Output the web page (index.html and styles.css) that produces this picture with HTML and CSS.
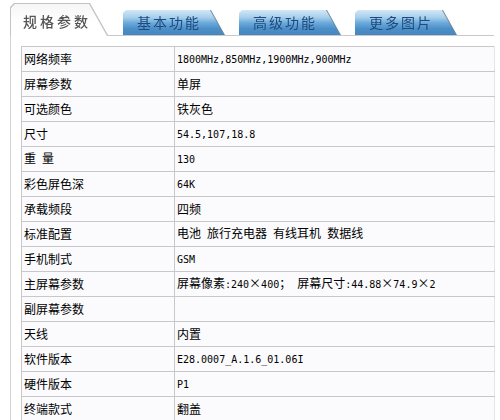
FILE: index.html
```html
<!DOCTYPE html>
<html lang="zh">
<head>
<meta charset="utf-8">
<link rel="stylesheet" href="styles.css">
</head>
<body>
<div class="page">
  <div class="tabs">
    <div class="tab-active-wrap"><div class="tab-active">规格参数</div></div>
    <div class="tab-wrap"><div class="tab">基本功能</div></div>
    <div class="tab-wrap"><div class="tab">高级功能</div></div>
    <div class="tab-wrap"><div class="tab">更多图片</div></div>
  </div>
  <div class="panel">
    <table class="spec">
      <colgroup><col class="c1"><col class="c2"></colgroup>
      <tr><td>网络频率</td><td><span class="m">1800MHz,850MHz,1900MHz,900MHz</span></td></tr>
      <tr><td>屏幕参数</td><td>单屏</td></tr>
      <tr><td>可选颜色</td><td>铁灰色</td></tr>
      <tr><td>尺寸</td><td><span class="m">54.5,107,18.8</span></td></tr>
      <tr><td>重<span class="m"> </span>量</td><td><span class="m">130</span></td></tr>
      <tr><td>彩色屏色深</td><td><span class="m">64K</span></td></tr>
      <tr><td>承载频段</td><td>四频</td></tr>
      <tr><td>标准配置</td><td>电池<span class="m"> </span>旅行充电器<span class="m"> </span>有线耳机<span class="m"> </span>数据线</td></tr>
      <tr><td>手机制式</td><td><span class="m">GSM</span></td></tr>
      <tr><td>主屏幕参数</td><td>屏幕像素<span class="m">:240</span><span class="fw">×</span><span class="m">400</span><span class="fw">；</span><span class="m"> </span>屏幕尺寸<span class="m">:44.88</span><span class="fw">×</span><span class="m">74.9</span><span class="fw">×</span><span class="m">2</span></td></tr>
      <tr><td>副屏幕参数</td><td></td></tr>
      <tr><td>天线</td><td>内置</td></tr>
      <tr><td>软件版本</td><td><span class="m">E28.0007_A.1.6_01.06I</span></td></tr>
      <tr><td>硬件版本</td><td><span class="m">P1</span></td></tr>
      <tr><td>终端款式</td><td>翻盖</td></tr>
    </table>
  </div>
</div>
</body>
</html>
```
FILE: styles.css
```css
html, body {
  margin: 0;
  padding: 0;
  background: #ffffff;
  overflow: hidden;
  height: 420px;
}
.page {
  padding-top: 4px;
  font-family: "Noto Sans CJK SC", "DejaVu Sans", sans-serif;
  color: #000;
}
.tabs {
  display: flex;
  align-items: flex-end;
  margin-left: 11px;
  width: 483px;
  height: 31px;
  border-bottom: 1px solid #c9c9c9;
}
.tab-active-wrap {
  filter: drop-shadow(-1px 0 0 #c4c4c4) drop-shadow(0 -1px 0 #c4c4c4) drop-shadow(1px 0 0 #c4c4c4);
  margin-bottom: -1px;
  position: relative;
  z-index: 1;
}
.tab-active {
  width: 96px;
  height: 32px;
  box-sizing: border-box;
  padding: 9px 0 0 12px;
  background: linear-gradient(#f6f6f6, #ffffff 60%);
  clip-path: polygon(0 4px, 4px 0, 78px 0, 96px 100%, 0 100%);
  font-size: 14px;
  line-height: 16px;
  letter-spacing: 3px;
  color: #555;
  font-weight: 500;
}
.tab-wrap {
  filter: drop-shadow(1px 0 0 #6f8596);
  margin-left: 15px;
}
.tab-active-wrap + .tab-wrap {
  margin-left: 16px;
}
.tab {
  width: 101px;
  height: 25px;
  box-sizing: border-box;
  padding: 4px 0 0 14px;
  background: linear-gradient(#d3e8f6 0%, #a6cfec 30%, #6aa9da 52%, #4c8fc7 75%, #4586be 100%);
  clip-path: polygon(0 3px, 3px 0, 87px 0, 101px 100%, 0 100%);
  font-size: 14px;
  line-height: 16px;
  letter-spacing: 2px;
  color: #1f4a7d;
}
.panel {
  margin-left: 10px;
  border-left: 1px solid #d4d4d4;
  padding: 10px 0 0 10px;
}
.spec {
  border-collapse: collapse;
  table-layout: fixed;
  width: 474px;
}
.c1 { width: 153px; }
.spec td {
  border: 1px solid #c8c8c8;
  height: 24px;
  padding: 0 0 0 2px;
  background: #fbfbfd;
  font-size: 12px;
  line-height: 14px;
  white-space: nowrap;
  overflow: hidden;
}
.spec tr td:last-child {
  border-right-color: #e6e6e6;
}
.m {
  font-family: "DejaVu Sans Mono", monospace;
  font-size: 10px;
  white-space: pre;
}
.fw {
  display: inline-block;
  width: 12px;
  text-align: center;
}
```
